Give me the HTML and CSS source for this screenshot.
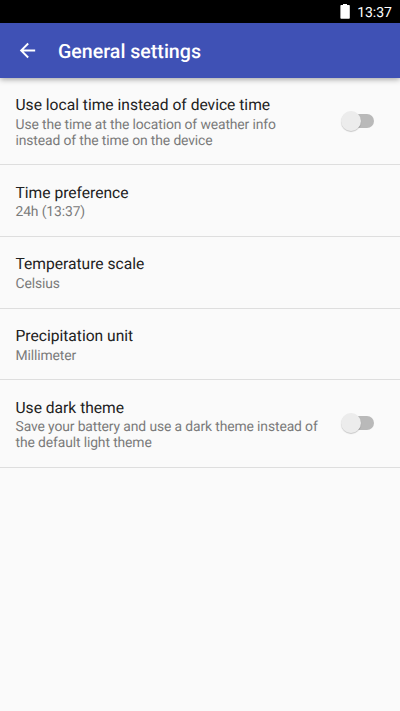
FILE: index.html
```html
<!DOCTYPE html>
<html lang="en">
<head>
<meta charset="utf-8">
<title>General settings</title>
<link rel="stylesheet" href="styles.css">
</head>
<body>
<div class="status">
  <svg class="battery" width="10" height="15" viewBox="0 0 10 15"><path fill="#fff" d="M3 0h4v1h2q.8 0 .8.8v12.200q0 .8-.8.8H1.200q-.8 0-.8-.8V1.800q0-.8.8-.8H3z"/></svg>
  <span class="clock">13:37</span>
</div>
<header class="bar">
  <svg class="back" width="23" height="23" viewBox="0 0 24 24"><path fill="#fff" d="M20 11H7.830l5.590-5.590L12 4l-8 8 8 8 1.410-1.410L7.830 13H20v-2z"/></svg>
  <h1 class="heading">General settings</h1>
</header>
<main>
  <section class="row double">
    <div class="text"><h2 class="title">Use local time instead of device time</h2><p class="summary">Use the time at the location of weather info<br>instead of the time on the device</p></div>
    <div class="switch"><div class="thumb"></div></div>
  </section>
  <section class="row"><div class="text"><h2 class="title">Time preference</h2><p class="summary">24h (13:37)</p></div></section>
  <section class="row"><div class="text"><h2 class="title">Temperature scale</h2><p class="summary">Celsius</p></div></section>
  <section class="row"><div class="text"><h2 class="title">Precipitation unit</h2><p class="summary">Millimeter</p></div></section>
  <section class="row double">
    <div class="text"><h2 class="title">Use dark theme</h2><p class="summary">Save your battery and use a dark theme instead of<br>the default light theme</p></div>
    <div class="switch"><div class="thumb"></div></div>
  </section>
</main>
</body>
</html>
```
FILE: styles.css
```css
* { box-sizing: border-box; margin: 0; padding: 0; }
body { background: #fafafa; font-family: Roboto, sans-serif; height: 711px; overflow: hidden; text-rendering: geometricPrecision; }
.status { height: 23px; background: #000; display: flex; align-items: center; justify-content: flex-end; padding-right: 8px; gap: 7px; }
.clock { color: #fff; font-size: 14px; font-weight: 400; line-height: 22px; padding-top: 2px; }
.bar { height: 55px; background: #3f51b5; display: flex; align-items: center; padding-left: 16px; gap: 19px; box-shadow: 0 1px 6px rgba(0,0,0,.4); }
.back { margin-bottom: 1px; }
.heading { color: #fff; font-size: 19.600px; font-weight: 500; line-height: 24px; padding-top: 3px; }
.row { height: 71.700px; border-bottom: 1px solid #dedede; display: flex; align-items: center; justify-content: space-between; padding: 0 26px 0 15.500px; }
.double { height: 87.300px; }
.text { padding-top: 2.300px; }
.title { color: #212121; font-size: 15.600px; font-weight: 400; line-height: 19px; white-space: nowrap; }
.summary { color: #7b7b7b; font-size: 13.900px; letter-spacing: -.12px; line-height: 16px; padding-top: 1.600px; margin-bottom: -.6px; white-space: nowrap; }
.switch { width: 33px; height: 20px; display: flex; align-items: center; position: relative; margin-bottom: 1px; }
.switch::before { content: ""; position: absolute; right: 0; top: 3px; width: 28px; height: 14px; border-radius: 7px; background: #b9b9b9; }
.thumb { position: relative; width: 20px; height: 20px; border-radius: 50%; background: #ececec; box-shadow: 0 1px 1px rgba(0,0,0,.2); }
```
